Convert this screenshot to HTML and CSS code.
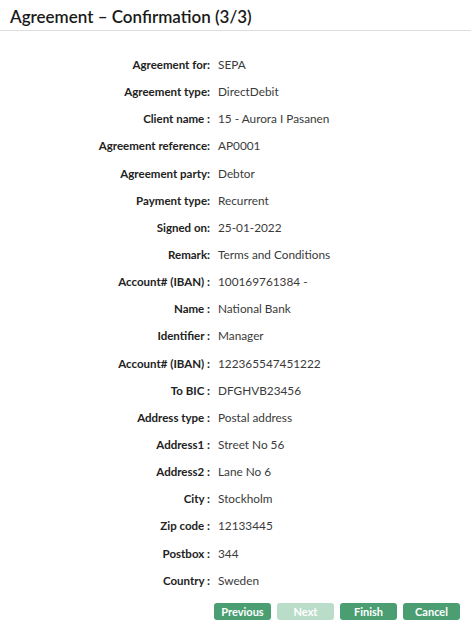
FILE: index.html
```html
<!DOCTYPE html>
<html>
<head>
<meta charset="utf-8">
<link rel="stylesheet" href="styles.css">
</head>
<body>
<div class="page">
  <h1 class="title">Agreement – Confirmation (3/3)</h1>
  <div class="details">
    <div class="row"><span class="label">Agreement for:</span><span class="value">SEPA</span></div>
    <div class="row"><span class="label">Agreement type:</span><span class="value">DirectDebit</span></div>
    <div class="row"><span class="label">Client name :</span><span class="value">15 - Aurora I Pasanen</span></div>
    <div class="row"><span class="label">Agreement reference:</span><span class="value">AP0001</span></div>
    <div class="row"><span class="label">Agreement party:</span><span class="value">Debtor</span></div>
    <div class="row"><span class="label">Payment type:</span><span class="value">Recurrent</span></div>
    <div class="row"><span class="label">Signed on:</span><span class="value">25-01-2022</span></div>
    <div class="row"><span class="label">Remark:</span><span class="value">Terms and Conditions</span></div>
    <div class="row"><span class="label">Account# (IBAN) :</span><span class="value">100169761384 -</span></div>
    <div class="row"><span class="label">Name :</span><span class="value">National Bank</span></div>
    <div class="row"><span class="label">Identifier :</span><span class="value">Manager</span></div>
    <div class="row"><span class="label">Account# (IBAN) :</span><span class="value">122365547451222</span></div>
    <div class="row"><span class="label">To BIC :</span><span class="value">DFGHVB23456</span></div>
    <div class="row"><span class="label">Address type :</span><span class="value">Postal address</span></div>
    <div class="row"><span class="label">Address1 :</span><span class="value">Street No 56</span></div>
    <div class="row"><span class="label">Address2 :</span><span class="value">Lane No 6</span></div>
    <div class="row"><span class="label">City :</span><span class="value">Stockholm</span></div>
    <div class="row"><span class="label">Zip code :</span><span class="value">12133445</span></div>
    <div class="row"><span class="label">Postbox :</span><span class="value">344</span></div>
    <div class="row"><span class="label">Country :</span><span class="value">Sweden</span></div>
  </div>
  <div class="actions">
    <button class="btn">Previous</button>
    <button class="btn btn-disabled" disabled>Next</button>
    <button class="btn">Finish</button>
    <button class="btn">Cancel</button>
  </div>
</div>
</body>
</html>
```
FILE: styles.css
```css
html, body {
  margin: 0;
  padding: 0;
  background: #ffffff;
}
body {
  font-family: Lato, "Open Sans", sans-serif;
  color: #333333;
}
.page {
  width: 471px;
}
.title {
  margin: 0;
  padding: 7px 10px 0 10px;
  height: 23px;
  font-size: 17px;
  font-weight: 600;
  line-height: 20px;
  color: #1a1a1a;
  border-bottom: 1px solid #dddddd;
}
.details {
  padding-top: 20px;
}
.row {
  display: grid;
  grid-template-columns: 210px 1fr;
  column-gap: 8px;
  height: 27.15px;
  align-items: center;
  font-size: 12px;
}
.label {
  text-align: right;
  font-size: 11.5px;
  font-weight: 700;
  color: #222222;
}
.value {
  font-size: 11.8px;
  font-weight: 400;
  color: #3a3a3a;
}
.actions {
  display: flex;
  justify-content: flex-end;
  gap: 6px;
  padding: 9px 11px 0 0;
}
.btn {
  width: 57px;
  height: 17px;
  padding: 0;
  border: none;
  border-radius: 3px;
  background: #4a9e72;
  color: #ffffff;
  font-family: Lato, sans-serif;
  font-size: 11px;
  font-weight: 700;
  line-height: 17px;
}
.btn-disabled {
  background: #b9ddc9;
}
```
